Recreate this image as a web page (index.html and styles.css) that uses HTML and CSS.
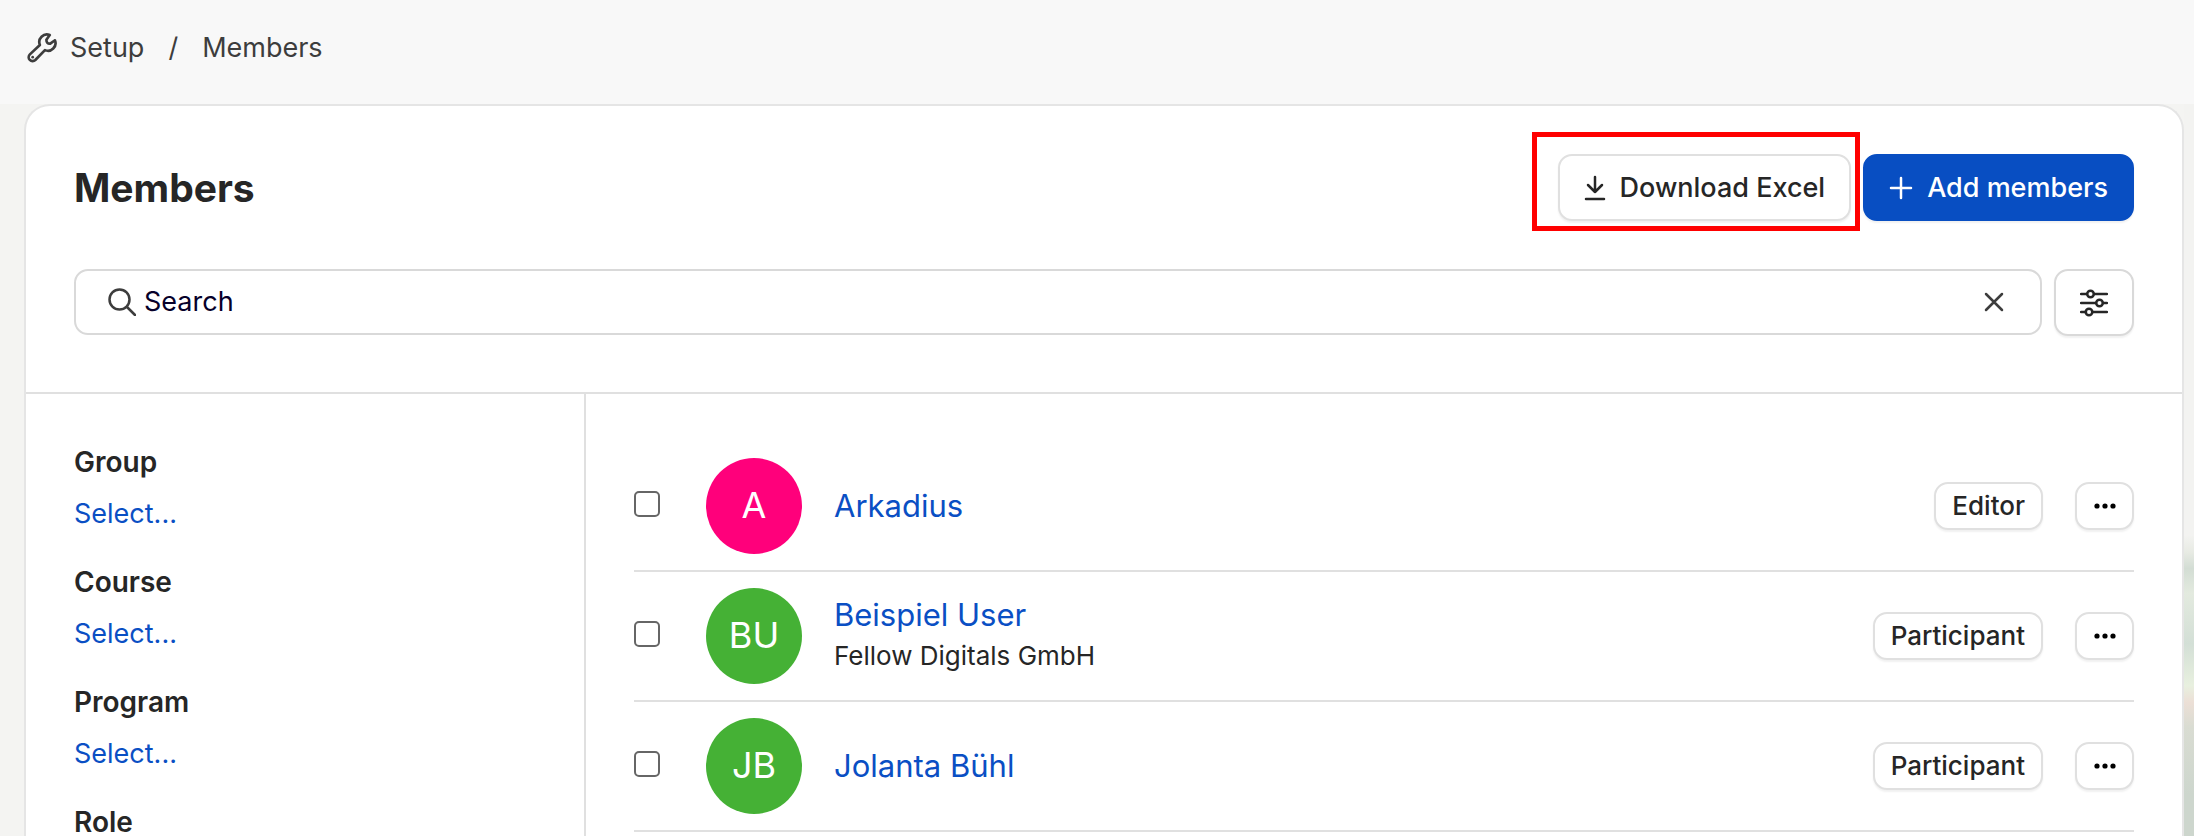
FILE: index.html
```html
<!DOCTYPE html>
<html lang="en">
<head>
    <meta charset="UTF-8">
    <title>Members</title>
    <link rel="stylesheet" href="styles.css">
</head>
<body>

<nav class="breadcrumb">
    <a href="#">
        <svg class="icon" width="32" height="32" viewBox="0 0 24 24"><path d="M17.800 2.300A5.700 5.700 0 0 0 10.400 9.700L2.900 16.800A2.600 2.600 0 0 0 7 21L14.200 13.600A5.700 5.700 0 0 0 21.700 6.200L18.200 8.700Q15.300 9 15.300 5.800Z"/><path d="M5 18.900h.01"/></svg>
        Setup
    </a>
    <span>/</span>
    <a href="#">Members</a>
</nav>

<main class="card">
    <header class="card-header">
        <div class="title-row">
            <h1>Members</h1>
            <div class="actions">
                <button class="btn download">
                    <svg class="icon" width="22" height="26" viewBox="0 0 22 26"><path d="M11 2v15M4 10l7 7 7-7M2 24h18"/></svg>
                    Download Excel
                </button>
                <button class="btn primary">
                    <svg class="icon" width="24" height="24" viewBox="0 0 24 24"><path d="M12 2v20M2 12h20"/></svg>
                    Add members
                </button>
            </div>
        </div>
        <div class="search-row">
            <div class="search">
                <svg class="icon" width="28" height="28" viewBox="0 0 28 28"><circle cx="11.500" cy="11.500" r="10"/><path d="M19 19l8 8"/></svg>
                <input type="text" id="search" placeholder="Search" aria-label="Search">
                <button class="clear" aria-label="Clear search">
                    <svg class="icon" width="20" height="20" viewBox="0 0 20 20"><path d="M2 2l16 16M18 2 2 18"/></svg>
                </button>
            </div>
            <button class="btn filter" aria-label="Filter">
                <svg class="icon" width="28" height="28" viewBox="0 0 28 28"><path d="M1 5h6M14 5h13M1 14h15M23 14h4M1 23h5M13 23h14"/><circle cx="10.500" cy="5" r="3.300"/><circle cx="19.500" cy="14" r="3.300"/><circle cx="9" cy="23" r="3.300"/></svg>
            </button>
        </div>
    </header>

    <div class="content">
        <aside class="filters">
            <section>
                <h2>Group</h2>
                <a href="#">Select...</a>
            </section>
            <section>
                <h2>Course</h2>
                <a href="#">Select...</a>
            </section>
            <section>
                <h2>Program</h2>
                <a href="#">Select...</a>
            </section>
            <section>
                <h2>Role</h2>
            </section>
        </aside>

        <ul class="members">
            <li>
                <input type="checkbox" aria-label="Select Arkadius">
                <span class="avatar pink">A</span>
                <div class="info"><a href="#">Arkadius</a></div>
                <button class="btn small">Editor</button>
                <button class="btn small more" aria-label="More"><svg width="22" height="6" viewBox="0 0 22 6"><circle cx="3" cy="3" r="2.600"/><circle cx="11" cy="3" r="2.600"/><circle cx="19" cy="3" r="2.600"/></svg></button>
            </li>
            <li>
                <input type="checkbox" aria-label="Select Beispiel User">
                <span class="avatar">BU</span>
                <div class="info"><a href="#">Beispiel User</a><p>Fellow Digitals GmbH</p></div>
                <button class="btn small">Participant</button>
                <button class="btn small more" aria-label="More"><svg width="22" height="6" viewBox="0 0 22 6"><circle cx="3" cy="3" r="2.600"/><circle cx="11" cy="3" r="2.600"/><circle cx="19" cy="3" r="2.600"/></svg></button>
            </li>
            <li>
                <input type="checkbox" aria-label="Select Jolanta Bühl">
                <span class="avatar">JB</span>
                <div class="info"><a href="#">Jolanta Bühl</a></div>
                <button class="btn small">Participant</button>
                <button class="btn small more" aria-label="More"><svg width="22" height="6" viewBox="0 0 22 6"><circle cx="3" cy="3" r="2.600"/><circle cx="11" cy="3" r="2.600"/><circle cx="19" cy="3" r="2.600"/></svg></button>
            </li>
        </ul>
    </div>
</main>

</body>
</html>
```
FILE: styles.css
```css
* {
    box-sizing: border-box;
}
body {
    height: 100vh;
    margin: 0;
    overflow: hidden;
    display: flex;
    flex-direction: column;
    font-family: Inter, "Liberation Sans", sans-serif;
    font-size: 27px;
    line-height: 36px;
    color: #262626;
    background: linear-gradient(#f3f3f1 64%, #e8ebe4 66%, #d3ddd4 68%, #e3eadf 71%, #d3dfd6 77%, #e8f0df 82%, #ecdfd6 84%, #d9dcd2 87%, #cdd6cd 95%) right / 10px 100% no-repeat #f4f4f2;
}
h1, h2, p, ul {
    margin: 0;
    padding: 0;
}
a {
    color: #0a4fc4;
    text-decoration: none;
}
button, input {
    font: inherit;
    color: inherit;
}
.icon {
    fill: none;
    stroke: currentColor;
    stroke-width: 2.5;
    stroke-linecap: round;
    stroke-linejoin: round;
    flex: none;
}

.breadcrumb {
    display: flex;
    align-items: center;
    gap: 24px;
    height: 104px;
    flex: none;
    padding: 0 26px 8px;
    background: #f8f8f8;
    color: #3d3d3d;
}
.breadcrumb a {
    display: flex;
    align-items: center;
    gap: 12px;
    color: inherit;
}
.breadcrumb .icon {
    stroke-width: 2;
}

.card {
    flex: 1;
    min-height: 0;
    overflow: hidden;
    display: flex;
    flex-direction: column;
    margin: 0 10px 0 24px;
    background: white;
    border: 2px solid #e5e5e5;
    border-bottom: 0;
    border-radius: 26px 26px 0 0;
}
.card-header {
    padding: 48px 48px 56px;
    border-bottom: 2px solid #e0e0e0;
}
.title-row, .search-row, .actions {
    display: flex;
    align-items: center;
}
.title-row {
    justify-content: space-between;
    margin-bottom: 48px;
}
h1 {
    font-size: 39px;
    line-height: 48px;
}
.actions, .search-row {
    gap: 12px;
}
.search-row {
    align-items: flex-start;
}
.btn {
    display: flex;
    align-items: center;
    justify-content: center;
    gap: 14px;
    height: 67px;
    padding: 0 24px;
    background: white;
    border: 2px solid #e0e0e0;
    border-radius: 14px;
    box-shadow: 0 2px 2px rgba(0, 0, 0, 0.06);
    font-weight: 500;
    white-space: nowrap;
}
.primary {
    background: #084ec2;
    border-color: #084ec2;
    color: white;
}
/* highlighted button */
.download {
    position: relative;
}
.download::after {
    content: "";
    position: absolute;
    inset: -24px -11px -12px -28px;
    border: 5px solid #ff0000;
}
.search {
    flex: 1;
    display: flex;
    align-items: center;
    gap: 8px;
    height: 66px;
    padding: 0 36px 0 32px;
    border: 2px solid #d9d9d9;
    border-radius: 14px;
    color: #3d3d3d;
}
.search input {
    flex: 1;
    padding: 0;
    border: 0;
    outline: 0;
    background: none;
}
.search input::placeholder {
    color: #06002a;
    opacity: 1;
}
.clear {
    display: flex;
    padding: 0;
    border: 0;
    background: none;
}
.filter {
    width: 80px;
    border-color: #d9d9d9;
}

.content {
    flex: 1;
    min-height: 0;
    display: flex;
}
.filters {
    width: 560px;
    flex: none;
    padding: 50px 48px 0;
    border-right: 2px solid #e0e0e0;
}
.filters section {
    margin-bottom: 32px;
}
.filters h2 {
    margin-bottom: 16px;
    font-size: 28px;
    line-height: 36px;
    font-weight: 600;
}
.filters a {
    display: block;
}

.members {
    flex: 1;
    padding: 48px 48px 0;
    list-style: none;
}
.members li {
    display: flex;
    align-items: center;
    height: 130px;
    border-bottom: 2px solid #e0e0e0;
}
.members input {
    appearance: none;
    width: 26px;
    height: 26px;
    margin: 0 46px 4px 0;
    border: 2px solid #666;
    border-radius: 5px;
    background: white;
}
.avatar {
    width: 96px;
    height: 96px;
    margin-right: 32px;
    border-radius: 50%;
    background: #45b135;
    color: white;
    font-size: 36px;
    line-height: 94px;
    text-align: center;
}
.pink {
    background: #ff007b;
}
.info {
    flex: 1;
}
.info a {
    display: block;
    font-size: 31px;
    line-height: 40px;
}
.info p {
    font-size: 26px;
    line-height: 42px;
}
.small {
    height: 48px;
    padding: 0 16px;
    font-size: 26px;
}
.more {
    width: 59px;
    margin-left: 32px;
}
```
